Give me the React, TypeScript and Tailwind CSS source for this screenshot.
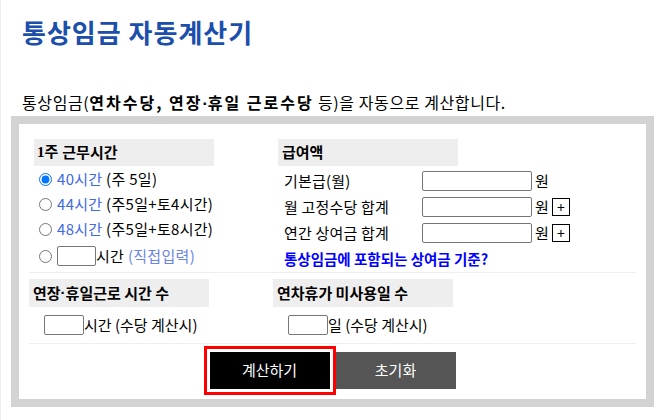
import React from "react"

const ko = "font-['Noto_Sans_CJK_KR',sans-serif]"

function Dot() {
    return <span className="font-['Liberation_Sans',sans-serif] tracking-normal">·</span>
}

function PlusBox() {
    return (
        <span className="ml-[3px] w-[18px] h-[18px] border border-black flex items-center justify-center text-[14px] leading-none">+</span>
    )
}

export default function App() {
    return (
        <div className={`min-h-[420px] bg-white border-l border-[#eeeeee] text-black ${ko}`}>
            <h1 className="pl-[21px] pt-[16px] h-[48px] text-[26px] leading-[32px] font-bold text-[#1c4eac] tracking-[1px]">
                통상임금 자동계산기
            </h1>
            <p className="pl-[21px] mt-[43px] text-[16px] leading-[22px] tracking-[0.6px]">
                통상임금(<b className="tracking-[2px]">연차수당, 연장<Dot />휴일 근로수당</b> 등)을 자동으로 계산합니다.
            </p>

            <div className="ml-[10px] mt-[1px] w-[643px] border-[8px] border-[#d3d3d3] px-[10px] pb-[10px]">
                {/* 근무시간 / 급여액 */}
                <div className="h-[149px] pt-[15px] border-b border-[#eeeeee] flex text-[15px]">
                    <div className="w-[244px] pl-[5px] tracking-[0.3px]">
                        <div className="w-[180px] h-[27px] bg-[#eeeeee] pl-[3px] flex items-center font-bold tracking-normal font-['Liberation_Serif','Noto_Sans_CJK_KR',serif]">
                            1주 <span className={`ml-[4px] ${ko}`}>근무시간</span>
                        </div>
                        <label className="h-[25px] mt-[1px] flex items-center">
                            <input type="radio" name="h" defaultChecked className="ml-[5px] mr-[5px] accent-[#0075ff]" />
                            <span className="text-[#4169e1]">40시간</span>&nbsp;(주 5일)
                        </label>
                        <label className="h-[25px] flex items-center">
                            <input type="radio" name="h" className="ml-[5px] mr-[5px]" />
                            <span className="text-[#4169e1]">44시간</span>&nbsp;(주5일+토4시간)
                        </label>
                        <label className="h-[25px] flex items-center">
                            <input type="radio" name="h" className="ml-[5px] mr-[5px]" />
                            <span className="text-[#4169e1]">48시간</span>&nbsp;(주5일+토8시간)
                        </label>
                        <label className="h-[28px] flex items-center">
                            <input type="radio" name="h" className="ml-[5px] mr-[5px]" />
                            <input type="text" className="w-[39px] h-[20px] border border-[#767676] rounded-[2px]" />
                            시간&nbsp;<span className="text-[#6b83e4]">(직접입력)</span>
                        </label>
                    </div>

                    <div className="flex-1 pl-[5px]">
                        <div className="w-[180px] h-[27px] bg-[#eeeeee] pl-[4px] flex items-center font-bold">급여액</div>
                        <div className="mt-[2px]">
                            {[
                                ["기본급(월)", false],
                                ["월 고정수당 합계", true],
                                ["연간 상여금 합계", true],
                            ].map(([label, plus]) => (
                                <div key={label as string} className="h-[26px] flex items-center">
                                    <span className="w-[144px] pl-[6px] tracking-[0.2px]">{label}</span>
                                    <input type="text" className="w-[110px] h-[20px] border border-[#767676] rounded-[2px]" />
                                    <span className="ml-[3px]">원</span>
                                    {plus && <PlusBox />}
                                </div>
                            ))}
                            <div className="h-[26px] flex items-center pl-[6px] text-[14.5px] font-bold text-[#0000ff]">
                                통상임금에 포함되는 상여금 기준?
                            </div>
                        </div>
                    </div>
                </div>

                {/* 시간 수 / 미사용일 수 */}
                <div className="h-[71px] pt-[6px] border-b border-[#eeeeee] flex text-[15px]">
                    <div className="w-[244px]">
                        <div className="w-[180px] h-[28px] bg-[#eeeeee] pl-[4px] flex items-center font-bold">연장<Dot />휴일근로 시간 수</div>
                        <div className="h-[36px] pl-[15px] flex items-center">
                            <input type="text" className="w-[40px] h-[20px] border border-[#767676] rounded-[2px]" />
                            시간 (수당 계산시)
                        </div>
                    </div>
                    <div className="flex-1">
                        <div className="w-[180px] h-[28px] bg-[#eeeeee] pl-[4px] flex items-center font-bold">연차휴가 미사용일 수</div>
                        <div className="h-[36px] pl-[15px] flex items-center">
                            <input type="text" className="w-[40px] h-[20px] border border-[#767676] rounded-[2px]" />
                            일 (수당 계산시)
                        </div>
                    </div>
                </div>

                {/* 버튼 */}
                <div className="pt-[8px] flex justify-center gap-[6px] text-[15px] text-white">
                    <button className="w-[120px] h-[37px] bg-black outline-[3px] outline-solid outline-[#ff0000] outline-offset-[3px]">계산하기</button>
                    <button className="w-[120px] h-[37px] bg-[#555555]">초기화</button>
                </div>
            </div>
        </div>
    )
}
